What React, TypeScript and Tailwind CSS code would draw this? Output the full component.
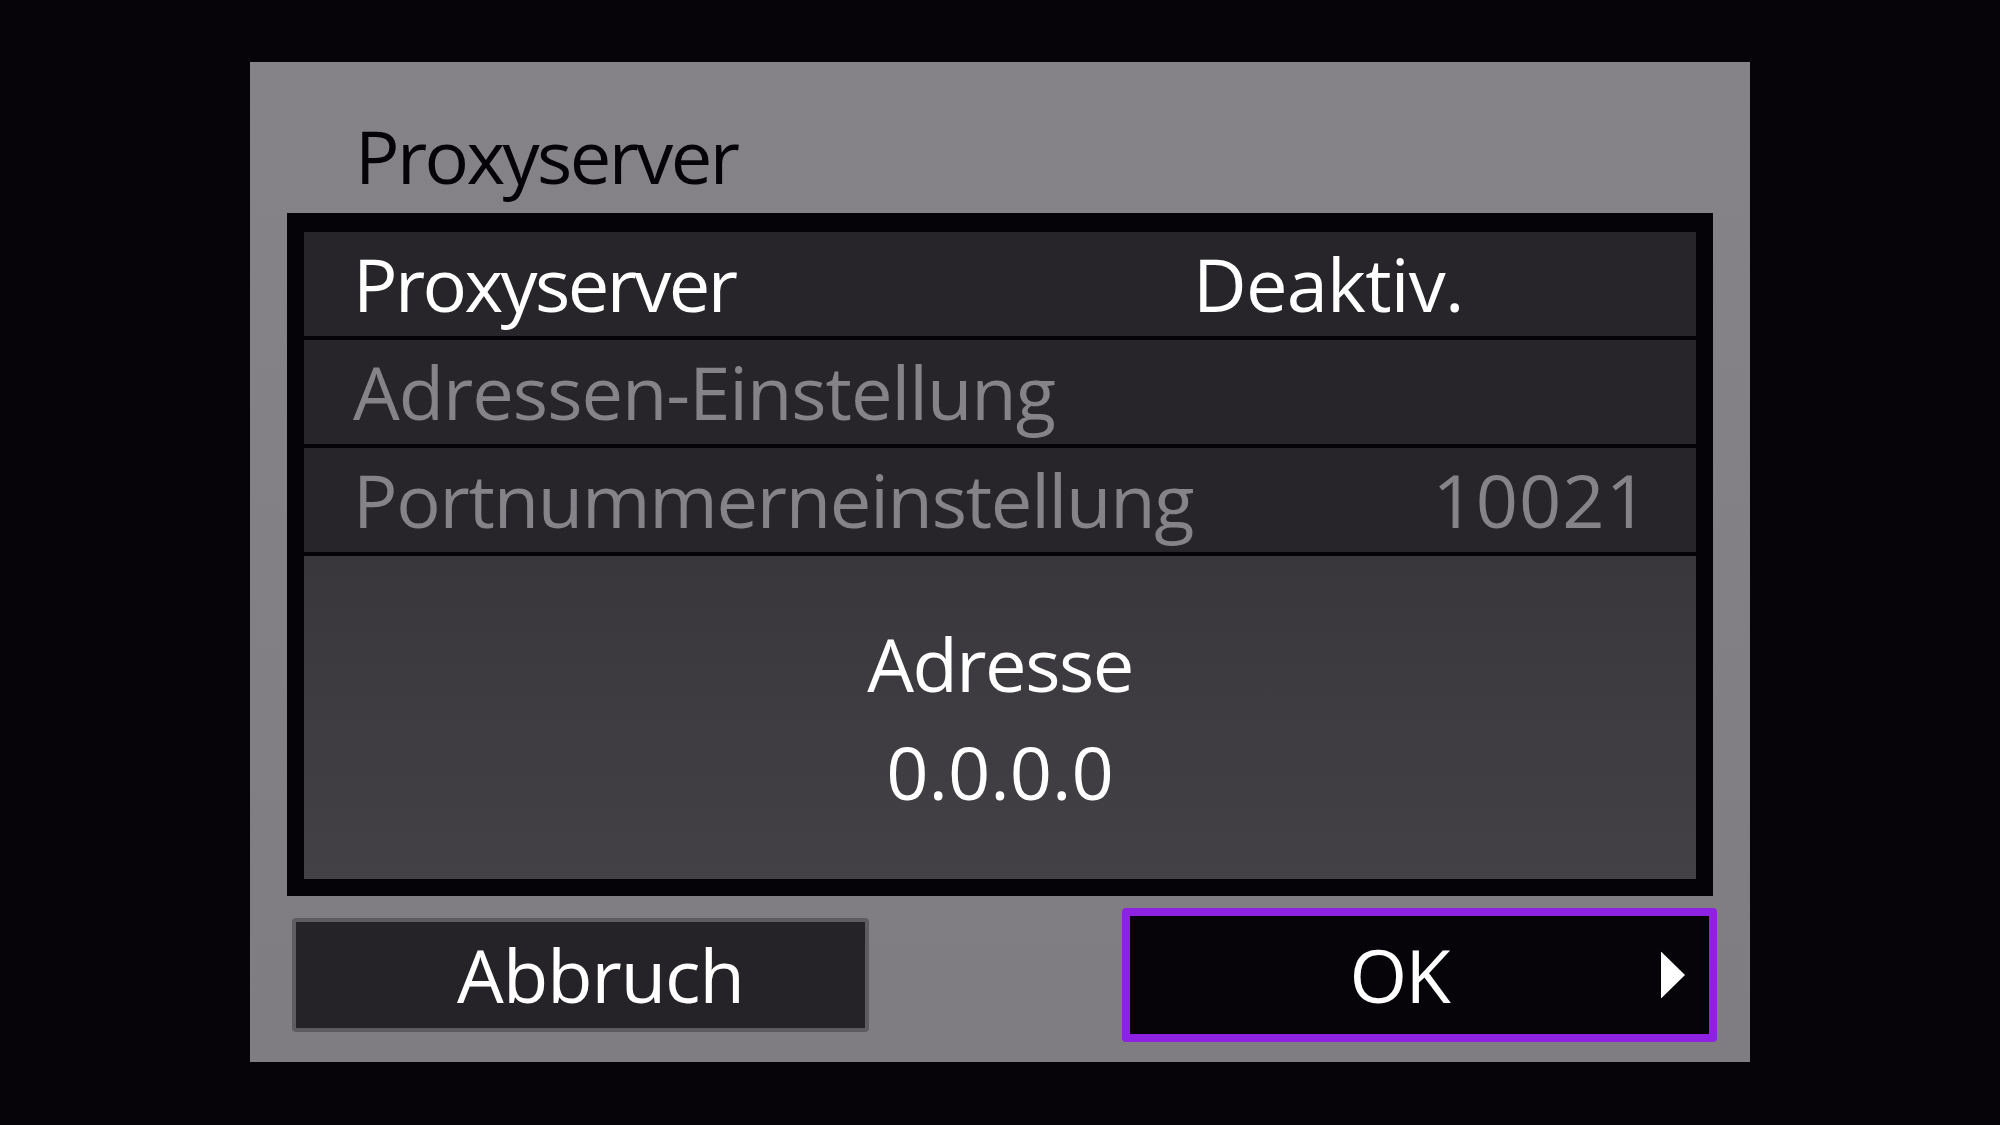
import React from "react";

const FONT = "font-['Open_Sans','Noto_Sans',sans-serif]";

function MenuRow({
  label,
  value,
  dimmed,
  alignValueRight,
  labelClass = "",
  valueClass = "",
}: {
  label: string;
  value?: string;
  dimmed?: boolean;
  alignValueRight?: boolean;
  labelClass?: string;
  valueClass?: string;
}) {
  const tone = dimmed ? "text-[#858387]" : "text-white";
  return (
    <div className="h-[104px] bg-[#27252a] flex items-center pl-[49px] pr-[47px]">
      <span className={`${tone} ${alignValueRight ? "flex-1" : "w-[840px] shrink-0"} whitespace-nowrap ${labelClass}`}>
        {label}
      </span>
      {value && <span className={`${tone} whitespace-nowrap ${valueClass}`}>{value}</span>}
    </div>
  );
}

export default function App() {
  return (
    <div className={`w-[2000px] h-[1125px] bg-[#060409] flex justify-center pt-[62px] ${FONT}`}>
      <div className="w-[1500px] h-[1000px] bg-gradient-to-b from-[#858387] to-[#7f7d81] flex flex-col text-[74px] leading-none">
        {/* Titel */}
        <div className="h-[151px] pt-[57px] pl-[105px] text-[#050307] tracking-[-2.6px]">Proxyserver</div>

        {/* Liste */}
        <div className="mx-[37px] h-[683px] bg-[#050307] pt-[19px] px-[17px] pb-[17px] flex flex-col gap-[4px]">
          <MenuRow label="Proxyserver" value="Deaktiv." labelClass="tracking-[-2.6px]" valueClass="tracking-[-0.75px]" />
          <MenuRow label="Adressen-Einstellung" dimmed labelClass="tracking-[-1px]" />
          <MenuRow
            label="Portnummerneinstellung"
            value="10021"
            dimmed
            alignValueRight
            labelClass="tracking-[-1.25px]"
            valueClass="tracking-[1px]"
          />
          <div className="flex-1 bg-gradient-to-b from-[#39373b] to-[#434145] flex flex-col items-center justify-center text-white">
            <div className="leading-[108px] tracking-[-1.5px]">Adresse</div>
            <div className="leading-[108px]">0.0.0.0</div>
          </div>
        </div>

        {/* Buttons */}
        <div className="flex-1 flex items-center justify-between pl-[42px] pr-[33px] pb-[8px]">
          <button className="w-[577px] h-[114px] rounded-[4px] border-[4px] border-[#5e5c60] bg-[#252327] text-white flex items-center justify-center pl-[40px] tracking-[-1px]">
            Abbruch
          </button>
          <button className="relative w-[595px] h-[134px] rounded-[4px] border-[8px] border-[#8d22e2] bg-[#060409] text-white flex items-center justify-center pr-[40px] tracking-[-1.5px]">
            OK
            <svg className="absolute right-[24px] top-1/2 -translate-y-1/2" width="24" height="47" viewBox="0 0 24 47">
              <polygon points="0,0 24,23.5 0,47" fill="#ffffff" />
            </svg>
          </button>
        </div>
      </div>
    </div>
  );
}
